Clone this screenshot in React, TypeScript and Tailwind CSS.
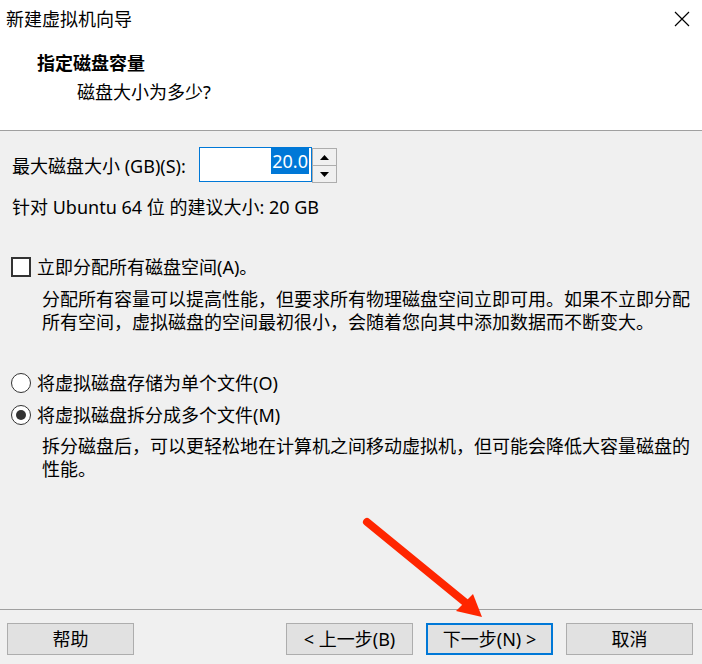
import React from "react";

function SpinButton({ up }: { up?: boolean }) {
  return (
    <div className="flex-1 flex items-center justify-center bg-[#f0f0f0]">
      <svg width="9" height="5" viewBox="0 0 9 5">
        {up ? <polygon points="0,5 9,5 4.5,0" fill="#000" /> : <polygon points="0,0 9,0 4.5,5" fill="#000" />}
      </svg>
    </div>
  );
}

function Radio({ checked }: { checked?: boolean }) {
  return (
    <span className="w-[20px] h-[20px] rounded-full border-[1.5px] border-[#333] bg-white flex items-center justify-center shrink-0">
      {checked && <span className="w-[10px] h-[10px] rounded-full bg-[#333]" />}
    </span>
  );
}

function Btn({ label, primary }: { label: string; primary?: boolean }) {
  return (
    <button
      className={
        primary
          ? "w-[127px] h-[32px] bg-[#e1e1e1] border-2 border-[#0078d7] text-[18px] text-[#000]"
          : "w-[127px] h-[32px] bg-[#e1e1e1] border border-[#adadad] text-[18px] text-[#000]"
      }
    >
      {label}
    </button>
  );
}

export default function App() {
  return (
    <div className="relative w-[702px] h-[664px] flex flex-col bg-[#f0f0f0] text-[#000] font-['Noto_Sans','Noto_Sans_CJK_SC',sans-serif] overflow-hidden">
      {/* header */}
      <div className="h-[131px] bg-white border-b border-[#a0a0a0] shrink-0">
        <div className="h-[37px] flex items-center justify-between pl-[6px] pr-[12px]">
          <span className="text-[18px] leading-[24px]">新建虚拟机向导</span>
          <svg width="16" height="16" viewBox="0 0 16 16">
            <path d="M1 1 L15 15 M15 1 L1 15" stroke="#000" strokeWidth="1.2" />
          </svg>
        </div>
        <div className="mt-[14px] pl-[37px] text-[18px] leading-[24px] font-bold">指定磁盘容量</div>
        <div className="mt-[5px] pl-[77px] text-[18px] leading-[24px]">磁盘大小为多少?</div>
      </div>

      {/* body */}
      <div className="flex-1 pl-[12px]">
        <div className="mt-[17px] flex items-center h-[35px]">
          <span className="w-[187px] text-[18px] leading-[24px]">最大磁盘大小 (GB)(S):</span>
          <div className="flex h-[35px]">
            <div className="w-[113px] h-[35px] border border-[#0078d7] bg-white flex justify-end items-start pr-[2px] -mt-[1px]">
              <span className="bg-[#0078d7] text-white text-[18px] leading-[26px] px-[1px]">20.0</span>
            </div>
            <div className="w-[25px] flex flex-col border border-[#adadad] gap-[1px] bg-[#adadad]">
              <SpinButton up />
              <SpinButton />
            </div>
          </div>
        </div>

        <div className="mt-[12px] text-[18px] leading-[24px]">针对 Ubuntu 64 位 的建议大小: 20 GB</div>

        <div className="mt-[36px] flex items-center h-[24px] -ml-[1px] gap-[6px]">
          <span className="w-[20px] h-[20px] border-2 border-[#333] bg-white shrink-0" />
          <span className="text-[18px] leading-[24px]">立即分配所有磁盘空间(A)。</span>
        </div>
        <div className="mt-[9px] pl-[30px] pr-[8px] text-[18px] leading-[23px]">
          分配所有容量可以提高性能，但要求所有物理磁盘空间立即可用。如果不立即分配所有空间，虚拟磁盘的空间最初很小，会随着您向其中添加数据而不断变大。
        </div>

        <div className="mt-[37px] flex items-center h-[24px] -ml-[1px] gap-[6px]">
          <Radio />
          <span className="text-[18px] leading-[24px]">将虚拟磁盘存储为单个文件(O)</span>
        </div>
        <div className="mt-[8px] flex items-center h-[24px] -ml-[1px] gap-[6px]">
          <Radio checked />
          <span className="text-[18px] leading-[24px]">将虚拟磁盘拆分成多个文件(M)</span>
        </div>
        <div className="mt-[8px] pl-[30px] pr-[8px] text-[18px] leading-[23px]">
          拆分磁盘后，可以更轻松地在计算机之间移动虚拟机，但可能会降低大容量磁盘的性能。
        </div>
      </div>

      {/* footer */}
      <div className="h-[55px] shrink-0 border-t border-[#a0a0a0] pt-[13px] pl-[7px] pr-[9px] flex items-start">
        <Btn label="帮助" />
        <div className="flex-1" />
        <div className="flex gap-[13px]">
          <Btn label="< 上一步(B)" />
          <Btn label="下一步(N) >" primary />
          <Btn label="取消" />
        </div>
      </div>

      {/* annotation arrow */}
      <svg className="absolute left-0 top-0 pointer-events-none" width="702" height="664" viewBox="0 0 702 664">
        <line x1="367" y1="522" x2="466" y2="603" stroke="#ff2600" strokeWidth="8" strokeLinecap="round" />
        <polygon points="482,617 456,611 473,594" fill="#ff2600" />
      </svg>
    </div>
  );
}
